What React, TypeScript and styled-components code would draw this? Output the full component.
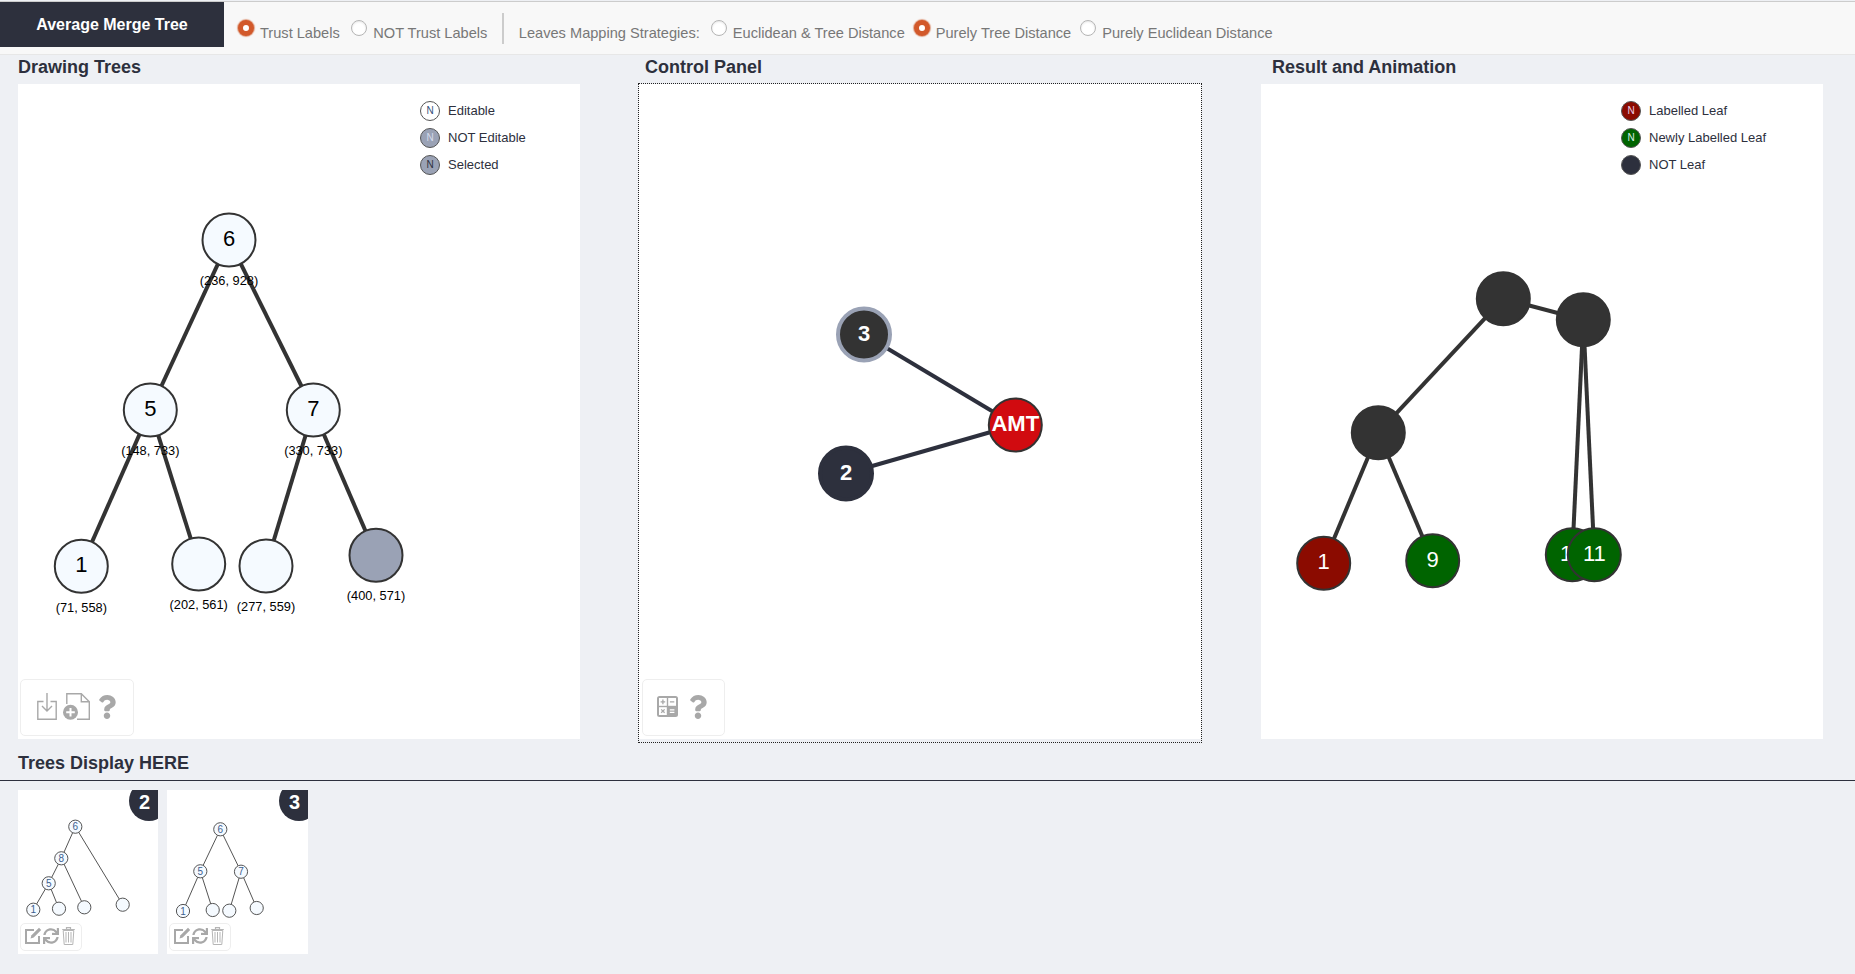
import React, { FC } from "react"
import styled, { createGlobalStyle } from "styled-components"
import { FaQuestion, FaSync } from "react-icons/fa"

const dark = "#2d303d"
const slate = "#9aa2b5"
const iconGrey = "#a8a8a8"

const GlobalStyle = createGlobalStyle`
  html, body {
    margin: 0;
    padding: 0;
    height: 100%;
    background: #eef0f4;
    font-family: "Liberation Sans", Arial, sans-serif;
    color: ${ dark };
  }
`

const Page = styled.div`
  width: 1855px;
  height: 974px;
  overflow: hidden;
`

const TopBar = styled.header`
  display: flex;
  height: 52px;
  margin-top: 1px;
  background: #f8f8f8;
  border-top: 1px solid #ccc;
  border-bottom: 1px solid #e7e7e7;
`

const Brand = styled.div`
  width: 224px;
  height: 45px;
  display: flex;
  align-items: center;
  justify-content: center;
  background: ${ dark };
  color: #fff;
  font-size: 16px;
  font-weight: bold;
`

const Options = styled.div`
  display: flex;
  align-items: center;
  padding: 15px 0 0 14px;
  height: 46px;
  box-sizing: border-box;
  font-size: 14.6px;
  color: #777;
`

const Option = styled.label<{ $tight?: boolean }>`
  display: flex;
  align-items: center;
  margin-right: ${ p => p.$tight ? 9 : 11.5 }px;
`

const Radio = styled.span<{ $checked?: boolean }>`
  width: 16px;
  height: 16px;
  box-sizing: border-box;
  margin: 0 6px 9px 0;
  border-radius: 50%;
  background: #fff;
  border: ${ p => p.$checked ? "5px solid #d2592b" : "1px solid #b5b5b5" };
  box-shadow: ${ p => p.$checked ? "0 0 1px 1px #e0a58c" : "inset 0 1px 2px rgba(0, 0, 0, 0.1)" };
`

const Divider = styled.span`
  width: 2px;
  height: 31px;
  margin: 0 15px 9px 3px;
  background: #ccc;
`

const OptionLead = styled.span`
  margin-right: 11px;
`

const Columns = styled.main`
  display: grid;
  grid-template-columns: 620px 623px 562px;
  padding: 1px 0 0 18px;
`

const Title = styled.h2<{ $indent?: number }>`
  height: 28px;
  margin: 0 0 0 ${ p => p.$indent || 0 }px;
  font-size: 18px;
  line-height: 22px;
  font-weight: bold;
`

const Panel = styled.section`
  position: relative;
  width: 562px;
  height: 655px;
  background: #fff;
`

const DottedFrame = styled.div`
  width: 562px;
  margin-top: -1px;
  padding-bottom: 3px;
  border: 1px dotted #222;
`

const Canvas = styled.svg`
  display: block;
  width: 100%;
  height: 100%;
`

const Legend = styled.ul<{ $left: number }>`
  position: absolute;
  top: 13px;
  left: ${ p => p.$left }px;
  margin: 0;
  padding: 0;
  list-style: none;
  font-size: 13px;
`

const LegendRow = styled.li`
  display: flex;
  align-items: center;
  gap: 8px;
  height: 27px;
`

const LegendDot = styled.span<{ $fill: string; $ink: string }>`
  width: 20px;
  height: 20px;
  box-sizing: border-box;
  display: flex;
  align-items: center;
  justify-content: center;
  border-radius: 50%;
  border: 1px solid #555;
  background: ${ p => p.$fill };
  color: ${ p => p.$ink };
  font-size: 10px;
`

const ToolBox = styled.div<{ $left?: number; $padLeft?: number }>`
  position: absolute;
  left: ${ p => p.$left || 2 }px;
  bottom: 3px;
  display: flex;
  align-items: center;
  height: 57px;
  box-sizing: border-box;
  padding: 0 17px 2px ${ p => p.$padLeft || 16 }px;
  border: 1px solid #eee;
  border-radius: 5px;
  background: #fff;
  color: ${ iconGrey };
`

const SmallToolBox = styled(ToolBox)`
  height: 28px;
  padding: 0 6px 3px 4px;
`

const Shelf = styled.section`
  margin-top: 9px;
`

const ShelfTitle = styled(Title)`
  height: 28px;
  padding-left: 18px;
`

const Thumbs = styled.div`
  display: flex;
  gap: 9px;
  padding: 9px 0 0 18px;
  border-top: 1px solid ${ dark };
`

const Thumb = styled.article<{ $width: number }>`
  position: relative;
  width: ${ p => p.$width }px;
  height: 164px;
  overflow: hidden;
  background: #fff;
`

const ThumbBadge = styled.span`
  position: absolute;
  top: -9px;
  right: -11px;
  width: 40px;
  height: 40px;
  padding: 1px 9px 0 0;
  box-sizing: border-box;
  display: flex;
  align-items: center;
  justify-content: center;
  border-radius: 50%;
  background: ${ dark };
  color: #fff;
  font-size: 20px;
  font-weight: bold;
  line-height: 1;
`

const ImportGlyph = styled.svg`
  width: 20px;
  height: 27px;
  flex: none;
`

const AddFileGlyph = styled.svg`
  width: 27px;
  height: 27px;
  margin-left: 6px;
  flex: none;
`

const HelpIcon = styled(FaQuestion)`
  width: 18px;
  height: 24px;
  margin-left: 7.5px;
  color: ${ iconGrey };
  flex: none;
`

const CalcGlyph = styled.svg`
  width: 21px;
  height: 21px;
  margin-right: 3px;
  flex: none;
`

const EditGlyph = styled.svg`
  width: 17px;
  height: 17px;
  flex: none;
`

const SyncIcon = styled(FaSync)`
  width: 16px;
  height: 16px;
  margin-left: 1px;
  color: ${ iconGrey };
  flex: none;
`

const TrashGlyph = styled.svg`
  width: 13px;
  height: 18px;
  margin-left: 3px;
  flex: none;
`

type TreeNode = {
  x: number
  y: number
  label?: string
  fill?: string
  ring?: string
  ringWidth?: number
  caption?: string
  captionY?: number
}

type TreeProps = {
  nodes: TreeNode[]
  edges: [number, number][]
  edgeColor: string
  ink: string
  bold?: boolean
}

const Tree: FC<TreeProps> = ({ nodes, edges, edgeColor, ink, bold }) => (
  <Canvas>
    { edges.map(([a, b]) => (
      <line key={ `${ a }-${ b }` } x1={ nodes[a].x } y1={ nodes[a].y } x2={ nodes[b].x } y2={ nodes[b].y } stroke={ edgeColor } strokeWidth={ 4 } />
    )) }
    { nodes.map((n, i) => (
      <g key={ i }>
        <circle cx={ n.x } cy={ n.y } r={ n.ringWidth ? 26 : 26.5 } fill={ n.fill || "#f5faff" } stroke={ n.ring || "#333" } strokeWidth={ n.ringWidth || 2 } />
        { n.label && (
          <text x={ n.x } y={ n.y + 6 } textAnchor="middle" fontSize={ 22 } fontWeight={ bold ? "bold" : "normal" } fill={ ink }>{ n.label }</text>
        ) }
        { n.caption && (
          <text x={ n.x } y={ n.captionY } textAnchor="middle" fontSize={ 12.8 } fill="#000">{ n.caption }</text>
        ) }
      </g>
    )) }
  </Canvas>
)

const MiniTree: FC<{ nodes: TreeNode[]; edges: [number, number][] }> = ({ nodes, edges }) => (
  <Canvas>
    { edges.map(([a, b]) => (
      <line key={ `${ a }-${ b }` } x1={ nodes[a].x } y1={ nodes[a].y } x2={ nodes[b].x } y2={ nodes[b].y } stroke="#555" strokeWidth={ 1 } />
    )) }
    { nodes.map((n, i) => (
      <g key={ i }>
        <circle cx={ n.x } cy={ n.y } r={ 6.6 } fill="#f5faff" stroke="#555" strokeWidth={ 1 } />
        { n.label && <text x={ n.x } y={ n.y + 3.5 } textAnchor="middle" fontSize={ 10 } fill="#3d5f8f">{ n.label }</text> }
      </g>
    )) }
  </Canvas>
)

const ImportIcon = () => (
  <ImportGlyph viewBox="0 0 20 27" fill="none" stroke={ iconGrey } strokeWidth="1.4">
    <path d="M6.5 8.5H.8v17.8h18.4V8.5h-5.7" />
    <path d="M10 0v17.5M5 13l5 5 5-5" />
  </ImportGlyph>
)

const AddFileIcon = () => (
  <AddFileGlyph viewBox="0 0 27 27" fill="none" stroke={ iconGrey } strokeWidth="1.4">
    <path d="M3.8 11V.8h14.5l8 8v17.4H14" />
    <path d="M18.3.8v8h8" />
    <circle cx="7.5" cy="19.3" r="7.5" fill={ iconGrey } stroke="none" />
    <path d="M7.5 15v8.6M3.2 19.3h8.6" stroke="#fff" strokeWidth="2" />
  </AddFileGlyph>
)

const CalcIcon = () => (
  <CalcGlyph viewBox="0 0 21 21">
    <rect width="21" height="21" rx="2.5" fill={ iconGrey } />
    <rect x="2" y="2" width="7.8" height="7.8" fill="#fff" />
    <rect x="11.2" y="2" width="7.8" height="7.8" fill="#fff" />
    <rect x="2" y="11.2" width="7.8" height="7.8" fill="#fff" />
    <path d="M3.6 5.9h4.6M5.9 3.6v4.6M12.9 5.9h4.4M4.2 13.4l3.4 3.4M7.6 13.4l-3.4 3.4" stroke={ iconGrey } strokeWidth="1.3" />
    <path d="M12.8 13.9h4.6M12.8 16.4h4.6" stroke="#fff" strokeWidth="1.3" />
  </CalcGlyph>
)

const EditIcon = () => (
  <EditGlyph viewBox="0 0 17 17" fill="none" stroke={ iconGrey } strokeWidth="2">
    <path d="M9 3H1v13h13V9" />
    <path d="M5.5 11.5l1-3.2L14 .8l2.2 2.2-7.5 7.5z" fill={ iconGrey } stroke="none" />
  </EditGlyph>
)

const TrashIcon = () => (
  <TrashGlyph viewBox="0 0 13 18" fill="none" stroke="#b5b5b5" strokeWidth="1">
    <path d="M4.5 2V.6h4V2M.2 2.5h12.6" strokeWidth="1.2" />
    <path d="M1.2 3.5l1 14h8.6l1-14z" />
    <path d="M4 5v10.5M6.5 5v10.5M9 5v10.5" />
  </TrashGlyph>
)

const drawingNodes: TreeNode[] = [
  { x: 211, y: 156, label: "6", caption: "(236, 928)", captionY: 201 },
  { x: 132.3, y: 326, label: "5", caption: "(148, 733)", captionY: 371 },
  { x: 295.3, y: 326, label: "7", caption: "(330, 733)", captionY: 371 },
  { x: 63.3, y: 482.2, label: "1", caption: "(71, 558)", captionY: 527.5 },
  { x: 180.7, y: 480, caption: "(202, 561)", captionY: 525 },
  { x: 248, y: 482, caption: "(277, 559)", captionY: 527 },
  { x: 358, y: 471.3, fill: slate, caption: "(400, 571)", captionY: 516 },
]
const drawingEdges: [number, number][] = [[0, 1], [0, 2], [1, 3], [1, 4], [2, 5], [2, 6]]

const controlNodes: TreeNode[] = [
  { x: 225, y: 250.5, label: "3", fill: "#333", ring: slate, ringWidth: 4 },
  { x: 207, y: 389.5, label: "2", fill: dark, ring: dark, ringWidth: 4 },
  { x: 376.3, y: 341, label: "AMT", fill: "#d10b10" },
]
const controlEdges: [number, number][] = [[0, 2], [1, 2]]

const resultNodes: TreeNode[] = [
  { x: 242.3, y: 214.7, fill: "#333" },
  { x: 322.3, y: 235.7, fill: "#333" },
  { x: 117.3, y: 348.7, fill: "#333" },
  { x: 62.7, y: 479.2, label: "1", fill: "#8b0b00" },
  { x: 171.7, y: 476.7, label: "9", fill: "#006400" },
  { x: 311.3, y: 470.7, label: "10", fill: "#006400" },
  { x: 333.3, y: 470.7, label: "11", fill: "#006400" },
]
const resultEdges: [number, number][] = [[0, 2], [0, 1], [2, 3], [2, 4], [1, 5], [1, 6]]

const thumbs = [
  {
    id: "2",
    width: 140,
    nodes: [
      { x: 57.3, y: 36.7, label: "6" },
      { x: 43.3, y: 68.3, label: "8" },
      { x: 104.7, y: 114.7 },
      { x: 30.7, y: 93.3, label: "5" },
      { x: 66.3, y: 117.3 },
      { x: 15.3, y: 119.7, label: "1" },
      { x: 41, y: 118.7 },
    ] as TreeNode[],
    edges: [[0, 1], [0, 2], [1, 3], [1, 4], [3, 5], [3, 6]] as [number, number][],
  },
  {
    id: "3",
    width: 141,
    nodes: [
      { x: 53.3, y: 39.3, label: "6" },
      { x: 33.3, y: 81.3, label: "5" },
      { x: 74, y: 81.7, label: "7" },
      { x: 16, y: 121, label: "1" },
      { x: 45.7, y: 120 },
      { x: 62.3, y: 120.7 },
      { x: 89.7, y: 118 },
    ] as TreeNode[],
    edges: [[0, 1], [0, 2], [1, 3], [1, 4], [2, 5], [2, 6]] as [number, number][],
  },
]

const App: FC = () => (
  <Page>
    <GlobalStyle />
    <TopBar>
      <Brand>Average Merge Tree</Brand>
      <Options>
        <Option><Radio $checked />Trust Labels</Option>
        <Option><Radio />NOT Trust Labels</Option>
        <Divider />
        <OptionLead>Leaves Mapping Strategies:</OptionLead>
        <Option $tight><Radio />Euclidean &amp; Tree Distance</Option>
        <Option $tight><Radio $checked />Purely Tree Distance</Option>
        <Option $tight><Radio />Purely Euclidean Distance</Option>
      </Options>
    </TopBar>

    <Columns>
      <div>
        <Title>Drawing Trees</Title>
        <Panel>
          <Tree nodes={ drawingNodes } edges={ drawingEdges } edgeColor="#333" ink="#000" />
          <Legend $left={ 402 }>
            <LegendRow><LegendDot $fill="#fff" $ink="#34507a">N</LegendDot>Editable</LegendRow>
            <LegendRow><LegendDot $fill={ slate } $ink="#d5dcec">N</LegendDot>NOT Editable</LegendRow>
            <LegendRow><LegendDot $fill={ slate } $ink={ dark }>N</LegendDot>Selected</LegendRow>
          </Legend>
          <ToolBox>
            <ImportIcon />
            <AddFileIcon />
            <HelpIcon />
          </ToolBox>
        </Panel>
      </div>

      <div>
        <Title $indent={ 7 }>Control Panel</Title>
        <DottedFrame>
          <Panel>
            <Tree nodes={ controlNodes } edges={ controlEdges } edgeColor={ dark } ink="#fff" bold />
            <ToolBox $left={ 3 } $padLeft={ 14 }>
              <CalcIcon />
              <HelpIcon />
            </ToolBox>
          </Panel>
        </DottedFrame>
      </div>

      <div>
        <Title $indent={ 11 }>Result and Animation</Title>
        <Panel>
          <Tree nodes={ resultNodes } edges={ resultEdges } edgeColor="#333" ink="#fff" />
          <Legend $left={ 360 }>
            <LegendRow><LegendDot $fill="#8b0b00" $ink="#f0d0e8">N</LegendDot>Labelled Leaf</LegendRow>
            <LegendRow><LegendDot $fill="#006400" $ink="#d8f0e8">N</LegendDot>Newly Labelled Leaf</LegendRow>
            <LegendRow><LegendDot $fill={ dark } $ink={ dark } />NOT Leaf</LegendRow>
          </Legend>
        </Panel>
      </div>
    </Columns>

    <Shelf>
      <ShelfTitle>Trees Display HERE</ShelfTitle>
      <Thumbs>
        { thumbs.map(t => (
          <Thumb key={ t.id } $width={ t.width }>
            <MiniTree nodes={ t.nodes } edges={ t.edges } />
            <ThumbBadge>{ t.id }</ThumbBadge>
            <SmallToolBox>
              <EditIcon />
              <SyncIcon />
              <TrashIcon />
            </SmallToolBox>
          </Thumb>
        )) }
      </Thumbs>
    </Shelf>
  </Page>
)

export default App
